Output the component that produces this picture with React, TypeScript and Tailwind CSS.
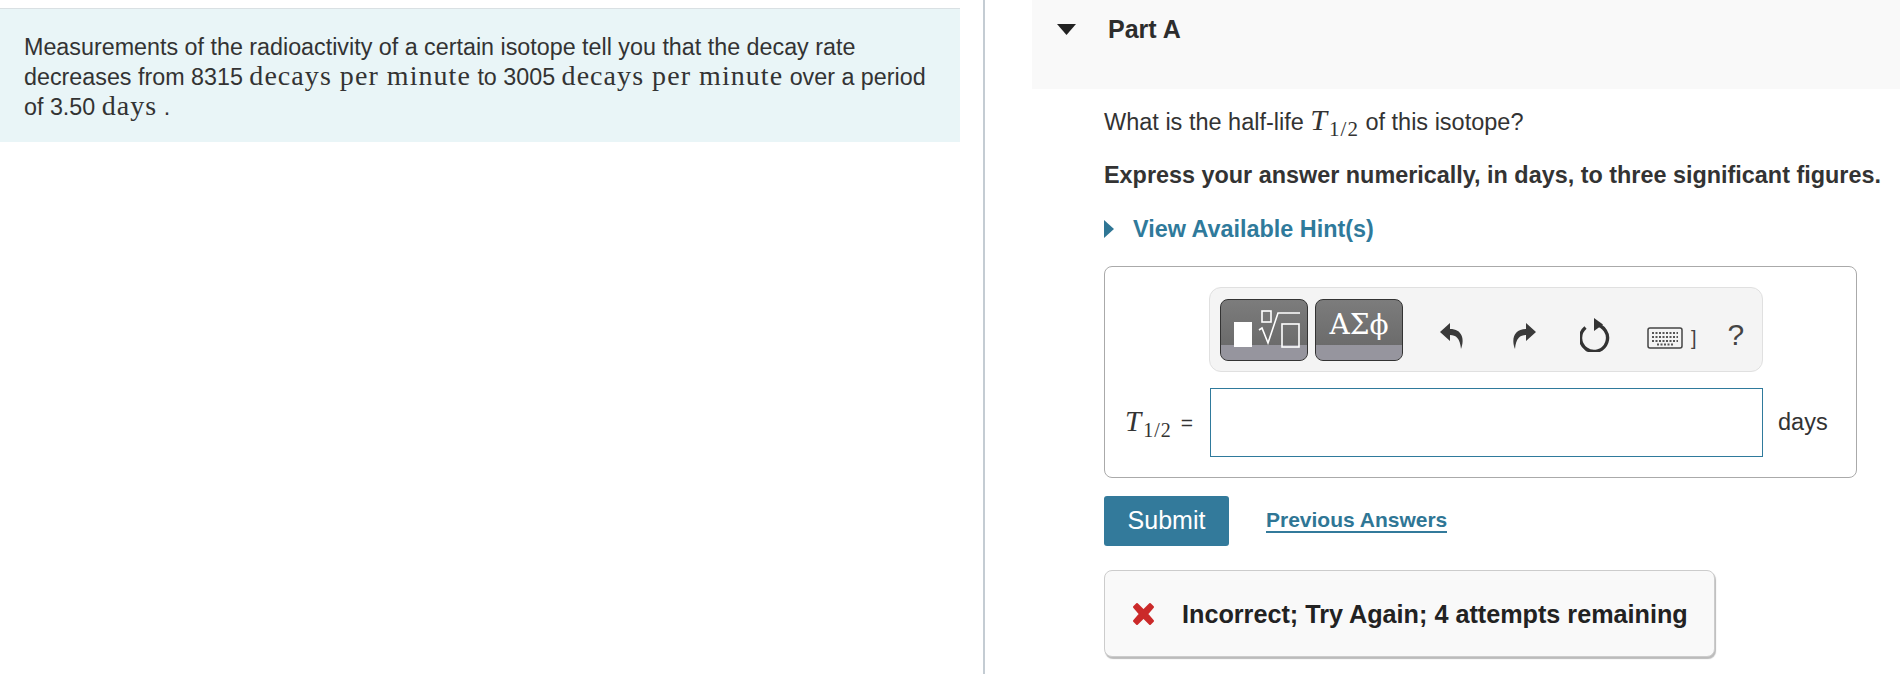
export default function App() {
  const serif = "font-['Liberation_Serif',serif]";
  const math = `${serif} text-[28px] leading-none tracking-[1.05px]`;
  const T = (cls: string, sub: string) => (
    <span className={`${serif} ${cls} whitespace-nowrap`}>
      <i className="mr-[2px]">T</i>
      <span className={`${sub} align-[-6px] tracking-[1px]`}>1/2</span>
    </span>
  );
  return (
    <div className="flex h-[674px] w-[1900px] overflow-hidden bg-white font-['Liberation_Sans',sans-serif] text-[#333]">
      <div className="w-[985px] shrink-0 border-r-2 border-[#c4ccd3] pt-2">
        <div className="h-[134px] w-[960px] border-t border-[#d9e0e3] bg-[#e9f5f7] pl-6 pt-[24px] text-[23.3px] leading-[29px]">
          <p className="w-[930px]">
            Measurements of the radioactivity of a certain isotope tell you that the decay rate<br />decreases from 8315{" "}
            <span className={math}>decays per minute</span> to 3005{" "}
            <span className={math}>decays per minute</span> over a period<br />of 3.50{" "}
            <span className={math}>days</span> .
          </p>
        </div>
      </div>
      <div className="flex-1">
        <div className="ml-[47px] flex h-[89px] bg-[#f9f9f9] pt-[15px]">
          <svg width="19" height="11" viewBox="0 0 19 11" className="ml-[25px] mt-[9px]"><path d="M0 0H19L9.5 11Z" fill="#222" /></svg>
          <span className="ml-[32px] text-[25px] font-bold leading-[28px] text-[#2d2d2d]">Part A</span>
        </div>
        <div className="ml-[119px] w-[770px]">
          <p className="mt-[16px] text-[23.5px] leading-[30px]">
            What is the half-life {T("text-[30px]", "text-[21px]")} of this isotope?
          </p>
          <p className="mt-[16px] whitespace-nowrap text-[23.4px] font-bold leading-[30px]">Express your answer numerically, in days, to three significant figures.</p>
          <div className="mt-[24px] flex items-center text-[23.4px] font-bold leading-[30px] text-[#2f7a9b]">
            <svg width="10" height="18" viewBox="0 0 10 18"><path d="M0 0L10 9L0 18Z" fill="#2f7695" /></svg>
            <span className="ml-[19px]">View Available Hint(s)</span>
          </div>
          <div className="mt-[22px] h-[212px] w-[753px] rounded-lg border border-[#aaa] pt-[20px]">
            <div className="ml-[104px] flex h-[85px] w-[554px] items-center rounded-xl border border-[#e0e0e0] bg-[#f4f4f4] pl-[10px]">
              <div className="relative h-[62px] w-[88px] overflow-hidden rounded-lg border border-[#333] bg-gradient-to-b from-[#7c7c7c] to-[#666]">
                <div className="absolute inset-x-0 bottom-0 h-[15px] bg-[#96959e]" />
                <svg width="86" height="56" viewBox="0 0 86 56" className="absolute left-0 top-0" fill="none" stroke="#fff" strokeWidth="1.6">
                  <rect x="13" y="22" width="18" height="25" fill="#fff" stroke="none" />
                  <rect x="41" y="11" width="9" height="11" />
                  <path d="M38 30L41 28L47 43L57 13H79" />
                  <rect x="61" y="24" width="17" height="23" />
                </svg>
              </div>
              <div className={`relative ml-[7px] flex h-[62px] w-[88px] justify-center overflow-hidden rounded-lg border border-[#333] bg-gradient-to-b from-[#7c7c7c] to-[#666] ${serif}`}>
                <div className="absolute inset-x-0 bottom-0 h-[15px] bg-[#96959e]" />
                <span className="relative mt-[10px] font-['DejaVu_Serif',serif] text-[28px] leading-[30px] text-white">ΑΣϕ</span>
              </div>
              <svg width="26" height="28" viewBox="0 0 26 28" className="ml-[36px] mt-[12px]"><path d="M11 1L1 10L11 19V13C17 13 21 16 22 27C26 17 23 7 11 7Z" fill="#3a3a3a" /></svg>
              <svg width="26" height="28" viewBox="0 0 26 28" className="ml-[46px] mt-[12px]"><path d="M15 1L25 10L15 19V13C9 13 5 16 4 27C0 17 3 7 15 7Z" fill="#3a3a3a" /></svg>
              <svg width="32" height="34" viewBox="0 0 32 34" className="ml-[43px] mt-[10px]" fill="none"><path d="M15 6.5A13.5 13.5 0 1 1 5.5 9.5" stroke="#333" strokeWidth="3.4" /><path d="M14 0L23 6.5L14 13Z" fill="#333" /></svg>
              <svg width="36" height="22" viewBox="0 0 36 22" className="ml-[35px] mt-[16px]" fill="none">
                <rect x="1" y="1" width="34" height="20" rx="2" stroke="#444" strokeWidth="1.5" />
                <path d="M5 6H31M5 10H31M5 14H31M10 17.5H26" stroke="#555" strokeWidth="2" strokeDasharray="2 1.5" />
              </svg>
              <span className="ml-[8px] mt-[16px] text-[20px] leading-[20px] text-[#444]">]</span>
              <span className="ml-[31px] mt-[10px] text-[30px] leading-[30px] text-[#444]">?</span>
            </div>
            <div className="mt-[16px] flex h-[69px] items-center">
              <div className="ml-[20px] flex w-[85px] items-center">
                {T("text-[29px]", "text-[20px]")}
                <span className="ml-[9px] text-[21px]">=</span>
              </div>
              <div className="h-[69px] w-[553px] border border-[#2f7a9c] bg-white" />
              <span className="ml-[15px] text-[23.5px]">days</span>
            </div>
          </div>
          <div className="mt-[18px] flex items-center">
            <button className="h-[50px] w-[125px] rounded-[3px] bg-[#337a9b] text-[25px] text-white">Submit</button>
            <a className="ml-[37px] border-b-2 border-[#337a9b] text-[21px] font-bold leading-[22px] text-[#2f7695]">Previous Answers</a>
          </div>
          <div className="mt-[24px] flex h-[87px] w-[611px] items-center rounded-lg border border-[#ccc] bg-[#f9f9f9] pl-[26px] shadow-[1px_2px_1px_#bbb]">
            <svg width="25" height="26" viewBox="0 0 25 26"><path d="M3 6L6 3L12.5 9.5L19 3L22 6L16 13L22 20L19 23L12.5 16.5L6 23L3 20L9 13Z" fill="#cb2a2a" stroke="#cb2a2a" strokeWidth="2" strokeLinejoin="round" /></svg>
            <span className="ml-[26px] text-[25.2px] font-bold leading-[30px] text-[#222]">Incorrect; Try Again; 4 attempts remaining</span>
          </div>
        </div>
      </div>
    </div>
  );
}
